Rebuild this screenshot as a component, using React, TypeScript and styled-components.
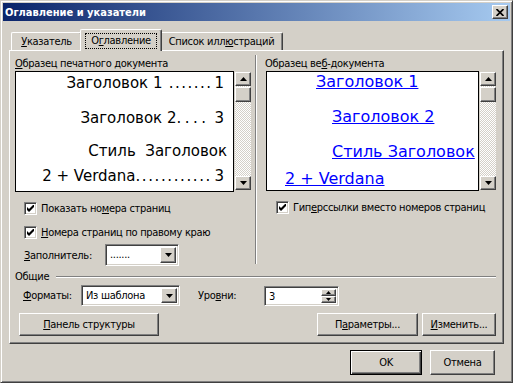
import React from "react";
import styled, { createGlobalStyle, css } from "styled-components";

const GlobalStyle = createGlobalStyle`
  html, body { margin: 0; padding: 0; background: #d4d0c8; }
  body {
    font-family: "DejaVu Sans Condensed", "DejaVu Sans", "Liberation Sans", sans-serif;
    font-stretch: condensed;
    font-size: 11px;
    letter-spacing: -0.3px;
    color: #000;
  }
  * { box-sizing: border-box; }
`;

const raised = css`
  background: #d4d0c8;
  border: 1px solid;
  border-color: #fff #404040 #404040 #fff;
  box-shadow: inset -1px -1px #808080;
`;

const sunken = css`
  border: 1px solid;
  border-color: #808080 #fff #fff #808080;
  box-shadow: inset 1px 1px #404040, inset -1px -1px #d4d0c8;
`;

const Window = styled.div`
  width: 513px;
  height: 383px;
  background: #d4d0c8;
  border: 1px solid;
  border-color: #d4d0c8 #404040 #404040 #d4d0c8;
  box-shadow: inset 1px 1px #fff, inset -1px -1px #808080;
  padding: 2px;
  display: flex;
  flex-direction: column;
`;

const TitleBar = styled.div`
  height: 18px;
  display: flex;
  align-items: center;
  padding: 0 2px 0 2px;
  background: linear-gradient(to right, #0a246a, #a6caf0);
`;

const Title = styled.div`
  flex: 1;
  color: #fff;
  font-weight: bold;
  font-size: 11px;
  letter-spacing: 0;
`;

const CloseButton = styled.div`
  ${raised};
  width: 16px;
  height: 14px;
  display: flex;
  align-items: center;
  justify-content: center;
`;

const Body = styled.div`
  flex: 1;
  display: flex;
  flex-direction: column;
  padding: 8px 6px 0 6px;
`;

const TabRow = styled.div`
  height: 21px;
  display: flex;
  align-items: flex-start;
  padding-left: 2px;
  position: relative;
  z-index: 1;
`;

const Tab = styled.div<{ $active?: boolean; $w: number }>`
  width: ${(p) => p.$w}px;
  height: ${(p) => (p.$active ? 22 : 18)}px;
  margin: ${(p) => (p.$active ? "0 -2px -1px -2px" : "3px 0 0 0")};
  position: relative;
  z-index: ${(p) => (p.$active ? 2 : 1)};
  background: #d4d0c8;
  border-top: 1px solid #fff;
  border-left: 1px solid #fff;
  border-right: 1px solid #404040;
  border-radius: 2px 2px 0 0;
  box-shadow: inset -1px 0 #808080;
  display: flex;
  justify-content: center;
  align-items: ${(p) => (p.$active ? "flex-start" : "center")};
  padding-top: ${(p) => (p.$active ? 3 : 0)}px;
  white-space: nowrap;
`;

const Focus = styled.span`
  height: 16px;
  line-height: 14px;
  padding: 0 5px;
  border: 1px dotted #000;
`;

const U = styled.span`
  text-decoration: underline;
`;

const Panel = styled.div`
  height: 294px;
  border: 1px solid;
  border-color: #fff #404040 #404040 #fff;
  box-shadow: inset -1px -1px #808080;
  padding: 6px 6px 0 5px;
  display: flex;
  flex-direction: column;
`;

const TopArea = styled.div`
  height: 209px;
  display: flex;
`;

const Column = styled.div<{ $w: number }>`
  width: ${(p) => p.$w}px;
  display: flex;
  flex-direction: column;
`;

const VSeparator = styled.div`
  width: 2px;
  height: 209px;
  margin: -2px 8px 0 4px;
  border-left: 1px solid #808080;
  border-right: 1px solid #fff;
`;

const Caption = styled.div`
  height: 13px;
  line-height: 13px;
  margin-bottom: 1px;
  white-space: nowrap;
`;

const PreviewRow = styled.div<{ $ml?: number }>`
  display: flex;
  align-items: flex-start;
  padding-left: ${(p) => p.$ml ?? 0}px;
`;

const PreviewBox = styled.div<{ $w: number; $h: number }>`
  width: ${(p) => p.$w}px;
  height: ${(p) => p.$h}px;
  border: 1px solid #000;
  background: #fff;
  overflow: hidden;
  display: flex;
  flex-direction: column;
  font-family: "DejaVu Sans", Verdana, sans-serif;
  font-stretch: normal;
  letter-spacing: 0;
`;

const PrintLine = styled.div<{ $mt: number; $pr: number; $lh: number }>`
  margin-top: ${(p) => p.$mt}px;
  padding-right: ${(p) => p.$pr}px;
  height: ${(p) => p.$lh}px;
  line-height: ${(p) => p.$lh}px;
  font-size: 15px;
  display: flex;
  justify-content: flex-end;
  white-space: pre;
`;

const Leader = styled.span<{ $w: number; $ls: number }>`
  display: inline-block;
  width: ${(p) => p.$w}px;
  letter-spacing: ${(p) => p.$ls}px;
`;

const WebLine = styled.div<{ $mt: number; $pl: number }>`
  margin-top: ${(p) => p.$mt}px;
  padding-left: ${(p) => p.$pl}px;
  height: 19px;
  line-height: 19px;
  font-size: 16px;
  white-space: nowrap;
`;

const Link = styled.span`
  color: #0000ff;
  text-decoration: underline;
`;

const ScrollBar = styled.div`
  width: 16px;
  height: 118px;
  margin: 1px 0 0 1px;
  display: flex;
  flex-direction: column;
  background-color: #fff;
  background-image: repeating-conic-gradient(#d4d0c8 0 25%, #fff 0 50%);
  background-size: 2px 2px;
`;

const ScrollBtn = styled.div<{ $h: number; $end?: boolean }>`
  ${raised};
  height: ${(p) => p.$h}px;
  margin-top: ${(p) => (p.$end ? "auto" : "0")};
  display: flex;
  align-items: center;
  justify-content: center;
`;

const Thumb = styled.div`
  ${raised};
  height: 15px;
  margin-top: 1px;
`;

const CheckRow = styled.div<{ $mt: number; $pl: number }>`
  margin-top: ${(p) => p.$mt}px;
  padding-left: ${(p) => p.$pl}px;
  height: 13px;
  display: flex;
  align-items: center;
  white-space: nowrap;
`;

const CheckBox = styled.span`
  ${sunken};
  width: 13px;
  height: 13px;
  background: #fff;
  display: inline-flex;
  align-items: center;
  justify-content: center;
  margin-right: 4px;
  flex: none;
`;

const FieldRow = styled.div<{ $mt: number; $pl: number }>`
  margin-top: ${(p) => p.$mt}px;
  padding-left: ${(p) => p.$pl}px;
  display: flex;
  align-items: center;
  white-space: nowrap;
`;

const FieldLabel = styled.span<{ $w: number; $ml?: number }>`
  width: ${(p) => p.$w}px;
  margin-left: ${(p) => p.$ml ?? 0}px;
  flex: none;
`;

const Combo = styled.div<{ $w: number; $h: number }>`
  ${sunken};
  width: ${(p) => p.$w}px;
  height: ${(p) => p.$h}px;
  background: #fff;
  padding: 2px;
  display: flex;
`;

const ComboText = styled.div`
  flex: 1;
  padding-left: 2px;
  line-height: 15px;
  white-space: nowrap;
`;

const DropBtn = styled.div`
  ${raised};
  width: 16px;
  display: flex;
  align-items: center;
  justify-content: center;
`;

const SpinButtons = styled.div`
  width: 15px;
  display: flex;
  flex-direction: column;
`;

const SpinBtn = styled.div`
  ${raised};
  flex: 1;
  display: flex;
  align-items: center;
  justify-content: center;
`;

const GroupHeader = styled.div`
  margin-top: 4px;
  height: 13px;
  display: flex;
  align-items: center;
`;

const HLine = styled.div`
  flex: 1;
  height: 2px;
  margin: 1px 1px 0 7px;
  border-top: 1px solid #808080;
  border-bottom: 1px solid #fff;
`;

const ButtonRow = styled.div`
  margin-top: 7px;
  display: flex;
  padding-right: 1px;
`;

const Button = styled.div<{ $w: number; $h?: number; $ml?: number; $auto?: boolean; $default?: boolean }>`
  ${raised};
  width: ${(p) => p.$w}px;
  height: ${(p) => p.$h ?? 23}px;
  margin-left: ${(p) => (p.$auto ? "auto" : `${p.$ml ?? 0}px`)};
  display: flex;
  align-items: center;
  justify-content: center;
  white-space: nowrap;
  ${(p) =>
    p.$default &&
    css`
      border: 1px solid #000;
      box-shadow: inset 1px 1px #fff, inset -1px -1px #404040, inset -2px -2px #808080;
    `}
`;

const Footer = styled.div`
  margin-top: 6px;
  display: flex;
  justify-content: flex-end;
  gap: 8px;
  padding-right: 9px;
`;

const Arrow = ({ up }: { up?: boolean }) => (
  <svg width="7" height="4" viewBox="0 0 7 4">
    <polygon points={up ? "3.5,0 7,4 0,4" : "0,0 7,0 3.5,4"} fill="#000" />
  </svg>
);

const SmallArrow = ({ up }: { up?: boolean }) => (
  <svg width="5" height="3" viewBox="0 0 5 3">
    <polygon points={up ? "2.5,0 5,3 0,3" : "0,0 5,0 2.5,3"} fill="#000" />
  </svg>
);

const Check = () => (
  <svg width="7" height="7" viewBox="0 0 7 7">
    <polygon points="0,2 2,4 7,-1 7,2 2,7 0,5" fill="#000" />
  </svg>
);

const Scroll = () => (
  <ScrollBar>
    <ScrollBtn $h={14}>
      <Arrow up />
    </ScrollBtn>
    <Thumb />
    <ScrollBtn $h={14} $end>
      <Arrow />
    </ScrollBtn>
  </ScrollBar>
);

export default function App() {
  return (
    <>
      <GlobalStyle />
      <Window>
        <TitleBar>
          <Title>Оглавление и указатели</Title>
          <CloseButton>
            <svg width="8" height="7" viewBox="0 0 8 7">
              <path d="M0.5 0 L7.5 7 M7.5 0 L0.5 7" stroke="#000" strokeWidth="1.7" />
            </svg>
          </CloseButton>
        </TitleBar>
        <Body>
          <TabRow>
            <Tab $w={71}>
              <span>
                <U>У</U>казатель
              </span>
            </Tab>
            <Tab $w={82} $active>
              <Focus>
                О<U>г</U>лавление
              </Focus>
            </Tab>
            <Tab $w={123}>
              <span>
                Список илл<U>ю</U>страций
              </span>
            </Tab>
          </TabRow>
          <Panel>
            <TopArea>
              <Column $w={236}>
                <Caption>
                  <U>О</U>бразец печатного документа
                </Caption>
                <PreviewRow>
                  <PreviewBox $w={219} $h={121}>
                    <PrintLine $mt={2} $pr={9} $lh={18}>
                      Заголовок 1<Leader $w={52} $ls={1.5}> .......</Leader>1
                    </PrintLine>
                    <PrintLine $mt={17} $pr={9} $lh={18}>
                      Заголовок 2<Leader $w={38} $ls={3.5}>....</Leader>3
                    </PrintLine>
                    <PrintLine $mt={12} $pr={6} $lh={25}>
                      Стиль  Заголовок
                    </PrintLine>
                    <PrintLine $mt={0} $pr={9} $lh={25}>
                      2 + Verdana<Leader $w={79} $ls={1.6}>............</Leader>3
                    </PrintLine>
                  </PreviewBox>
                  <Scroll />
                </PreviewRow>
                <CheckRow $mt={10} $pl={9}>
                  <CheckBox>
                    <Check />
                  </CheckBox>
                  Показать но<U>м</U>ера страниц
                </CheckRow>
                <CheckRow $mt={11} $pl={9}>
                  <CheckBox>
                    <Check />
                  </CheckBox>
                  <U>Н</U>омера страниц по правому краю
                </CheckRow>
                <FieldRow $mt={5} $pl={9}>
                  <FieldLabel $w={81}>
                    <U>З</U>аполнитель:
                  </FieldLabel>
                  <Combo $w={74} $h={22}>
                    <ComboText>.......</ComboText>
                    <DropBtn>
                      <Arrow />
                    </DropBtn>
                  </Combo>
                </FieldRow>
              </Column>
              <VSeparator />
              <Column $w={231}>
                <Caption>
                  Образец ве<U>б</U>-документа
                </Caption>
                <PreviewRow $ml={1}>
                  <PreviewBox $w={213} $h={120}>
                    <WebLine $mt={0} $pl={49}>
                      <Link>Заголовок 1</Link>
                    </WebLine>
                    <WebLine $mt={16} $pl={65}>
                      <Link>Заголовок 2</Link>
                    </WebLine>
                    <WebLine $mt={16} $pl={65}>
                      <Link>Стиль Заголовок</Link>
                    </WebLine>
                    <WebLine $mt={8} $pl={18}>
                      <Link>2 + Verdana</Link>
                    </WebLine>
                  </PreviewBox>
                  <Scroll />
                </PreviewRow>
                <CheckRow $mt={10} $pl={11}>
                  <CheckBox>
                    <Check />
                  </CheckBox>
                  Гип<U>е</U>рссылки вместо номеров страниц
                </CheckRow>
              </Column>
            </TopArea>
            <GroupHeader>
              Общие
              <HLine />
            </GroupHeader>
            <FieldRow $mt={2} $pl={8}>
              <FieldLabel $w={58}>
                <U>Ф</U>орматы:
              </FieldLabel>
              <Combo $w={99} $h={21}>
                <ComboText>Из шаблона</ComboText>
                <DropBtn>
                  <Arrow />
                </DropBtn>
              </Combo>
              <FieldLabel $w={66} $ml={18}>
                Уро<U>в</U>ни:
              </FieldLabel>
              <Combo $w={75} $h={20}>
                <ComboText>3</ComboText>
                <SpinButtons>
                  <SpinBtn>
                    <SmallArrow up />
                  </SpinBtn>
                  <SpinBtn>
                    <SmallArrow />
                  </SpinBtn>
                </SpinButtons>
              </Combo>
            </FieldRow>
            <ButtonRow>
              <Button $w={140} $ml={4}>
                <span>
                  <U>П</U>анель структуры
                </span>
              </Button>
              <Button $w={101} $auto>
                <span>
                  П<U>а</U>раметры...
                </span>
              </Button>
              <Button $w={74} $ml={4}>
                <span>
                  <U>И</U>зменить...
                </span>
              </Button>
            </ButtonRow>
          </Panel>
          <Footer>
            <Button $w={72} $h={25} $default>
              OK
            </Button>
            <Button $w={65} $h={25}>
              Отмена
            </Button>
          </Footer>
        </Body>
      </Window>
    </>
  );
}
